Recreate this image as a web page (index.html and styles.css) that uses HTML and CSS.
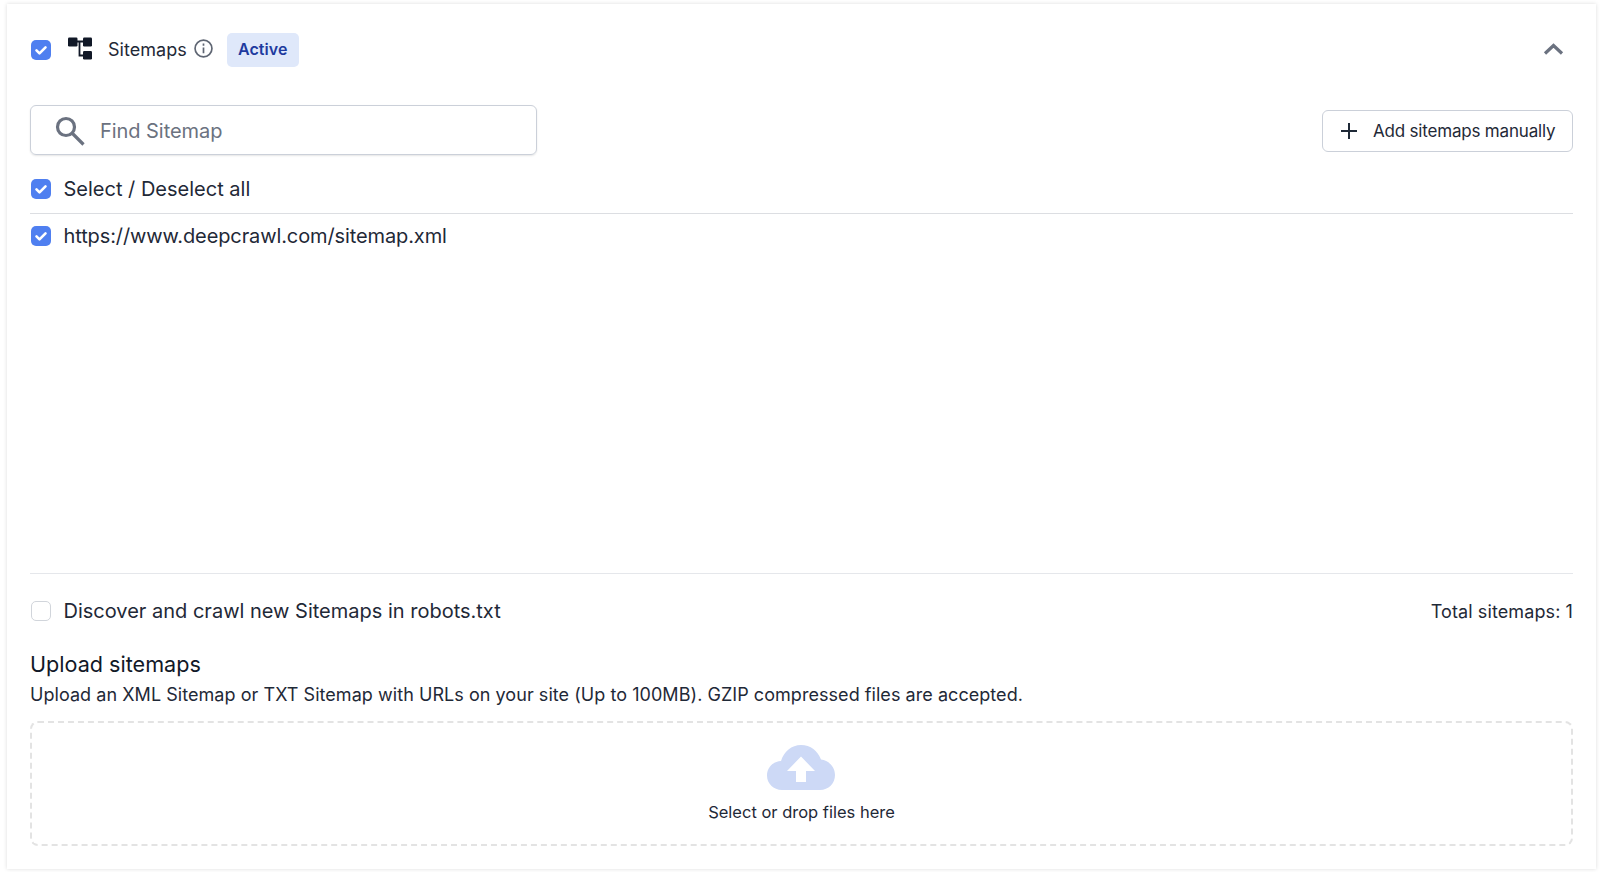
FILE: index.html
```html
<!DOCTYPE html>
<html lang="en">
<head>
<meta charset="utf-8">
<title>Sitemaps</title>
<link rel="stylesheet" href="styles.css">
</head>
<body>
<main class="card">
  <header class="head">
    <span class="check on"><svg viewBox="0 0 20 20"><path d="M5.500 10.300l3 3 6-6"/></svg></span>
    <svg class="logo" viewBox="0 0 26 24">
      <rect x="1" y="1.500" width="9.500" height="9" rx="1.200"/><rect x="16" y="1.500" width="9" height="9" rx="1.200"/><rect x="16" y="15" width="9" height="8.500" rx="1.200"/>
      <path class="logo-line" d="M10 5.500h6.500M12.500 5.500V19.500h4"/>
    </svg>
    <span class="title">Sitemaps</span>
    <svg class="info" viewBox="0 0 18 18"><circle cx="9" cy="9" r="8"/><path d="M9 8v5.500M9 4.300v2"/></svg>
    <span class="badge">Active</span>
    <svg class="chevron" viewBox="0 0 20 12"><path d="M1.500 10.500L10 2.500l8.500 8"/></svg>
  </header>

  <div class="tools">
    <label class="search">
      <svg viewBox="0 0 30 30"><circle cx="11" cy="11" r="8.500"/><path d="M17.500 17.500l11 11"/></svg>
      <span>Find Sitemap</span>
    </label>
    <button class="add" type="button">
      <svg viewBox="0 0 16 16"><path d="M8 0v16M0 8h16"/></svg>
      Add sitemaps manually
    </button>
  </div>

  <div class="row select-all">
    <span class="check on"><svg viewBox="0 0 20 20"><path d="M5.500 10.300l3 3 6-6"/></svg></span>
    <span>Select / Deselect all</span>
  </div>
  <div class="list">
    <div class="row url">
      <span class="check on"><svg viewBox="0 0 20 20"><path d="M5.500 10.300l3 3 6-6"/></svg></span>
      <span>https://www.deepcrawl.com/sitemap.xml</span>
    </div>
  </div>

  <div class="foot">
    <div class="row">
      <span class="check"></span>
      <span>Discover and crawl new Sitemaps in robots.txt</span>
    </div>
    <span class="total">Total sitemaps: 1</span>
  </div>

  <h2 class="upload-title">Upload sitemaps</h2>
  <p class="upload-desc">Upload an XML Sitemap or TXT Sitemap with URLs on your site (Up to 100MB). GZIP compressed files are accepted.</p>
  <div class="drop">
    <svg viewBox="0 0 68 45"><path class="cloud" d="M15 45C6.500 45 0 38.500 0 30.500 0 22.500 6 16.500 14 16 17 6.500 24.500 0 34 0c9.500 0 17 6 20 14.500C62 15.500 68 22 68 30c0 8.500-6.500 15-15 15z"/><path class="arrow" d="M34 11.500L48 26H39V37H29V26H20z"/></svg>
    <span>Select or drop files here</span>
  </div>
</main>
</body>
</html>
```
FILE: styles.css
```css
* { box-sizing: border-box; }
html, body { margin: 0; height: 100%; background: #fff; }
body {
  padding: 4px 4px 3px 7px;
  font-family: Inter, "Liberation Sans", sans-serif;
  color: #1f2937;
}
.card {
  height: 865px;
  padding: 0 23px;
  background: #fff;
  box-shadow: 0 0 4px rgba(0, 0, 0, 0.14);
  display: flex;
  flex-direction: column;
}
.head {
  display: flex;
  align-items: center;
  height: 34px;
  margin-top: 29px;
  padding-left: 1px;
}
.check {
  flex: none;
  width: 20px;
  height: 20px;
  border: 1px solid #d1d5db;
  border-radius: 5px;
  background: #fff;
  display: block;
}
.check.on { border: 0; background: #4f7ff0; }
.check svg { display: block; width: 20px; height: 20px; fill: none; stroke: #fff; stroke-width: 2.600; stroke-linecap: round; stroke-linejoin: round; }
.logo { flex: none; width: 26px; height: 24px; margin: -4px 0 0 16px; fill: #111827; }
.logo-line { fill: none; stroke: #111827; stroke-width: 1.800; }
.title { margin-left: 15px; font-size: 18px; line-height: 22px; color: #1f2937; letter-spacing: 0.03px; }
.info { flex: none; width: 19px; height: 19px; margin: -3px -1px 0 7px; fill: none; stroke: #5f6673; stroke-width: 1.600; }
.badge {
  margin-left: 15px;
  width: 72px;
  height: 34px;
  border-radius: 5px;
  background: #dfe8fa;
  color: #1e3a9f;
  font-size: 16px;
  font-weight: 600;
  line-height: 33px;
  letter-spacing: 0.05px;
  text-align: center;
}
.chevron { width: 21px; height: 12px; margin: -3px 9px 0 auto; fill: none; stroke: #6b7280; stroke-width: 3.200; }
.tools { display: flex; align-items: center; justify-content: space-between; margin-top: 38px; }
.search {
  width: 507px;
  height: 50px;
  display: flex;
  align-items: center;
  gap: 15px;
  padding: 1px 0 0 24px;
  border: 1px solid #cbd0d9;
  border-radius: 6px;
  box-shadow: 0 1px 2px rgba(0, 0, 0, 0.1);
  font-size: 20px;
  letter-spacing: -0.05px;
  color: #6b7280;
}
.search svg { width: 30px; height: 30px; fill: none; stroke: #6b7280; stroke-width: 3.200; }
.add {
  width: 251px;
  height: 42px;
  margin-top: 2px;
  display: flex;
  align-items: center;
  gap: 16px;
  padding: 0 0 0 18px;
  border: 1px solid #cbd0d9;
  border-radius: 6px;
  background: #fff;
  font: 400 17px Inter, "Liberation Sans", sans-serif;
  letter-spacing: -0.19px;
  color: #1f2937;
}
.add svg { flex: none; width: 16px; height: 16px; fill: none; stroke: #1f2937; stroke-width: 2; }
.row { display: flex; align-items: center; gap: 12.500px; padding-left: 1px; font-size: 20px; line-height: 24px; }
.select-all { margin-top: 22px; padding-bottom: 12px; border-bottom: 1px solid #dcdee2; height: 37px; }
.list { padding-top: 10px; height: 360px; border-bottom: 1px solid #e5e7eb; }
.url { letter-spacing: -0.11px; }
.foot { display: flex; align-items: center; justify-content: space-between; margin-top: 25px; }
.total { font-size: 18px; letter-spacing: 0.1px; }
.upload-title { margin: 28px 0 0; font-size: 21.600px; line-height: 26px; font-weight: 400; color: #111827; }
.upload-desc { margin: 5px 0 0; font-size: 18px; line-height: 26px; letter-spacing: 0.05px; color: #1f2937; }
.drop {
  flex: none;
  height: 125px;
  margin-top: 13px;
  border: 2px dashed #e3e3e3;
  border-radius: 8px;
  display: flex;
  flex-direction: column;
  align-items: center;
  padding-top: 22px;
  gap: 11px;
  font-size: 16.500px;
  line-height: 22px;
  color: #1f2937;
}
.drop svg { width: 68px; height: 45px; margin-right: 2px; }
.cloud { fill: #cdd9f6; }
.arrow { fill: #fff; }
```
